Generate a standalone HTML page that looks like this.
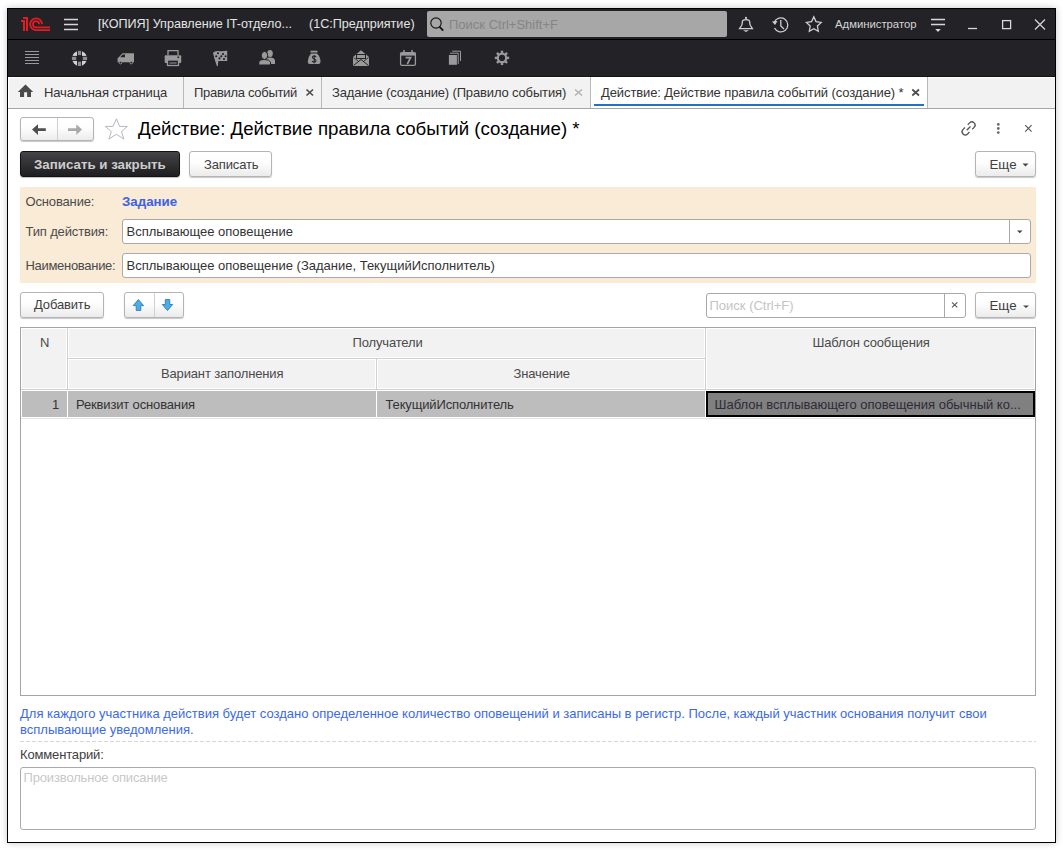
<!DOCTYPE html>
<html><head><meta charset="utf-8">
<style>
*{box-sizing:border-box;margin:0;padding:0}
html,body{width:1063px;height:850px;overflow:hidden;background:#fff;font-family:"Liberation Sans",sans-serif;}
.a{position:absolute}
.t{position:absolute;white-space:nowrap;line-height:1;font-size:12.6px;color:#333}
#win{position:absolute;left:7px;top:8px;width:1049px;height:835px;border:1px solid #000;background:#fff;box-shadow:0 0 7px rgba(0,0,0,0.22)}
.btn{position:absolute;border:1px solid #b4b4b4;border-radius:3px;background:linear-gradient(#fff 0%,#fdfdfd 45%,#ebebeb 100%);box-shadow:0 1px 1px rgba(0,0,0,0.22)}
.tx{font-size:13px;letter-spacing:-0.15px;color:#404040}
.hc{position:absolute;background:#f2f2f2}
</style></head><body>
<div id="win"></div>
<!-- title bar -->
<div class="a" style="left:8px;top:9px;width:1047px;height:30px;background:#232327"></div>
<div class="a" style="left:8px;top:39px;width:1047px;height:1px;background:#000"></div>
<!-- toolbar -->
<div class="a" style="left:8px;top:40px;width:1047px;height:37px;background:#232327"></div>
<div class="a" style="left:8px;top:76px;width:1047px;height:1px;background:#141417"></div>
<!-- tabs -->
<div class="a" style="left:8px;top:77px;width:1047px;height:31px;background:#f2f2f2;border-top:1px solid #fff;border-left:1px solid #fff"></div>
<div class="a" style="left:8px;top:108px;width:1047px;height:1px;background:#a6a6a6"></div>

<!-- title content -->
<svg class="a" style="left:0;top:0" width="1063" height="77" viewBox="0 0 1063 77">
 <g fill="none" stroke="#e31c23" stroke-width="2">
  <path d="M23 18H27V31"/>
  <path d="M21 21H24V31"/>
  <path d="M42 24.2A5.9 5.9 0 1 0 36.1 30.1H50" stroke-width="1.8"/>
  <path d="M39.2 24.2A3.1 3.1 0 1 0 36.1 27.3H50" stroke-width="1.8"/>
 </g>
 <g stroke="#d8d8d8" stroke-width="1.4">
  <path d="M64 19.5H78M64 24.5H78M64 29.5H78"/>
 </g>
 <!-- bell -->
 <g fill="none" stroke="#cfcfcf" stroke-width="1.3">
  <path d="M739.6 28.6H752.4L750.3 25.3Q749.7 24 749.7 22.3V21.9Q749.7 19.6 746 19.6Q742.3 19.6 742.3 21.9V22.3Q742.3 24 741.7 25.3Z"/>
 </g>
 <circle cx="746" cy="17.9" r="1.1" fill="#cfcfcf"/>
 <path d="M743 30.3H749L746 32Z" fill="#cfcfcf"/>
 <!-- history -->
 <g fill="none" stroke="#cfcfcf" stroke-width="1.3">
  <path d="M774.3 22.3A7 7 0 1 1 774.5 28"/>
  <path d="M780.8 20V26L784 29"/>
 </g>
 <path d="M772 21.5L777.5 21L775 25Z" fill="#cfcfcf"/>
 <!-- star -->
 <path d="M813.8 16.8L816 21.6L821.2 22.4L817.4 26.1L818.3 31.2L813.8 28.8L809.3 31.2L810.2 26.1L806.4 22.4L811.6 21.6Z" fill="none" stroke="#cfcfcf" stroke-width="1.3" stroke-linejoin="miter"/>
 <!-- filter -->
 <g stroke="#d8d8d8" stroke-width="1.3"><path d="M931 19.5H945M931 24.5H945"/></g>
 <path d="M935.2 29H940.8L938 32Z" fill="#d8d8d8"/>
 <!-- min max close -->
 <path d="M968 28.5H977" stroke="#d8d8d8" stroke-width="1.3"/>
 <rect x="1002.6" y="20.6" width="8" height="8" fill="none" stroke="#d8d8d8" stroke-width="1.3"/>
 <path d="M1035 19.5L1045 29.5M1045 19.5L1035 29.5" stroke="#d8d8d8" stroke-width="1.2"/>
 <!-- search box -->
 <rect x="427" y="11" width="300" height="26" rx="2" fill="#a7a7a7"/>
 <circle cx="436" cy="23" r="5.2" fill="none" stroke="#151515" stroke-width="1.15"/>
 <path d="M439.6 26.8L443.2 30.6" stroke="#151515" stroke-width="1.9"/>
</svg>
<div class="t" style="left:98px;top:18px;font-size:12.6px;color:#e4e4e4">[КОПИЯ] Управление IT-отдело...</div>
<div class="t" style="left:309px;top:18px;font-size:12.6px;color:#e4e4e4">(1С:Предприятие)</div>
<div class="t" style="left:449px;top:18px;font-size:13px;color:#858585">Поиск Ctrl+Shift+F</div>
<div class="t" style="left:835px;top:19px;font-size:11.3px;color:#d4d4d4">Администратор</div>

<!-- toolbar icons -->
<svg class="a" style="left:0;top:40px" width="520" height="36" viewBox="0 40 520 36">
 <g stroke="#9a9a9a" stroke-width="1.2"><path d="M25 51.5H39M25 54.5H39M25 57.5H39M25 60.5H39M25 63.5H39"/></g>
 <!-- lifebuoy -->
 <circle cx="79.5" cy="58.4" r="7.5" fill="#d2d2d2"/>
 <rect x="77" y="50" width="5" height="17" fill="#232327"/>
 <rect x="71" y="55.9" width="17" height="5" fill="#232327"/>
 <g fill="#8e8e8e"><rect x="77.9" y="50.8" width="3.2" height="4.3"/><rect x="77.9" y="61.7" width="3.2" height="4.3"/><rect x="71.9" y="56.8" width="4.3" height="3.2"/><rect x="82.8" y="56.8" width="4.3" height="3.2"/></g>
 <!-- truck -->
 <path d="M119 57L122.5 53.3H134V62.3H117.6V58.5Z" fill="#9a9a9a"/>
 <path d="M120.2 57.2L122.8 54.5H125V57.2Z" fill="#232327"/>
 <circle cx="120.5" cy="62.6" r="1.3" fill="#232327" stroke="#9a9a9a" stroke-width="0.9"/>
 <circle cx="131.3" cy="62.6" r="1.3" fill="#232327" stroke="#9a9a9a" stroke-width="0.9"/>
 <!-- printer -->
 <path d="M168 55V50.6H178V55" fill="none" stroke="#9a9a9a" stroke-width="1.3"/>
 <rect x="164.7" y="55.3" width="16.5" height="7.7" rx="1" fill="#9a9a9a"/>
 <rect x="167.5" y="60" width="11" height="5.5" fill="#232327" stroke="#9a9a9a" stroke-width="1.3"/>
 <path d="M169.5 63H176.5" stroke="#9a9a9a" stroke-width="1"/>
 <rect x="177.5" y="56.5" width="1.6" height="1.6" fill="#232327"/>
 <!-- flag -->
 <path d="M213 52.8Q214.6 50.8 218.6 51.1Q222.8 51.6 227.2 50.8V61H218.3L217.8 66.2L216.8 66L214.4 58.5Z" fill="#9a9a9a"/>
 <g fill="#1e1e22"><circle cx="218" cy="53.3" r="1.05"/><circle cx="223" cy="54" r="1.05"/><circle cx="216.2" cy="56.3" r="1.05"/><circle cx="221.3" cy="56.2" r="1.05"/><circle cx="225.6" cy="56.2" r="1.05"/><circle cx="219.5" cy="58.4" r="1.05"/><circle cx="224" cy="59" r="1.05"/></g>
 <!-- people -->
 <ellipse cx="270" cy="53.5" rx="2.8" ry="3.5" fill="#9a9a9a"/>
 <path d="M265.5 64V60.5Q266 57.5 270 57.5Q274.5 57.5 275 60.5V64Z" fill="#9a9a9a"/>
 <ellipse cx="264.5" cy="55.5" rx="3.2" ry="4" fill="#9a9a9a" stroke="#232327" stroke-width="1"/>
 <path d="M258.8 65V62Q259.5 59.5 264.5 59.5Q269.5 59.5 270.5 62V65Z" fill="#9a9a9a" stroke="#232327" stroke-width="1"/>
 <!-- money bag -->
 <rect x="310.5" y="50.7" width="7" height="1.8" fill="#9a9a9a"/>
 <path d="M311 53.5H317Q320.5 57 320.5 61.5Q320.5 64 318.5 64H309.5Q307.8 64 307.8 61.5Q307.8 57 311 53.5Z" fill="#9a9a9a"/>
 <path d="M316.2 56.9Q315.4 56 314.1 56Q312.4 56.1 312.5 57.5Q312.6 58.4 314.2 58.9Q316 59.5 316 60.7Q315.9 62.1 314.1 62.1Q312.8 62.1 312 61.2M314.2 54.9V63.2" fill="none" stroke="#232327" stroke-width="1.1"/>
 <!-- envelope -->
 <path d="M353 57L361 50.3L369 57V66H353Z" fill="#9a9a9a"/>
 <rect x="356" y="54" width="10" height="5" fill="#232327"/>
 <rect x="357" y="55" width="8" height="3" fill="#9a9a9a"/>
 <path d="M353.5 65.5L361 59.5L368.5 65.5" fill="none" stroke="#232327" stroke-width="1"/>
 <path d="M353.5 57.5L358 61M368.5 57.5L364 61" stroke="#232327" stroke-width="0.8"/>
 <!-- calendar -->
 <rect x="400.6" y="52.6" width="14.8" height="12.8" rx="1.3" fill="none" stroke="#9a9a9a" stroke-width="1.3"/>
 <rect x="400.6" y="52.6" width="14.8" height="3" fill="#9a9a9a"/>
 <path d="M404 50V54M412 50V54" stroke="#9a9a9a" stroke-width="1.5"/>
 <path d="M405.6 57.6H410.6L407.3 64.2" fill="none" stroke="#9a9a9a" stroke-width="1.7"/>
 <!-- copies -->
 <rect x="448.9" y="55" width="8" height="9.8" fill="#9a9a9a"/>
 <path d="M450 53.2H458.2V64M452.2 51.2H460.5V61" fill="none" stroke="#9a9a9a" stroke-width="1"/>
 <!-- gear -->
 <g transform="translate(502 57.9)">
  <circle r="4.2" fill="none" stroke="#9a9a9a" stroke-width="2.2"/>
  <g fill="#9a9a9a">
   <rect x="-1.2" y="-7.2" width="2.4" height="3.4"/>
   <rect x="-1.2" y="-7.2" width="2.4" height="3.4" transform="rotate(45)"/>
   <rect x="-1.2" y="-7.2" width="2.4" height="3.4" transform="rotate(90)"/>
   <rect x="-1.2" y="-7.2" width="2.4" height="3.4" transform="rotate(135)"/>
   <rect x="-1.2" y="-7.2" width="2.4" height="3.4" transform="rotate(180)"/>
   <rect x="-1.2" y="-7.2" width="2.4" height="3.4" transform="rotate(225)"/>
   <rect x="-1.2" y="-7.2" width="2.4" height="3.4" transform="rotate(270)"/>
   <rect x="-1.2" y="-7.2" width="2.4" height="3.4" transform="rotate(315)"/>
  </g>
 </g>
</svg>

<!-- tabs content -->
<div class="a" style="left:183px;top:77px;width:1px;height:31px;background:#b9b9b9"></div>
<div class="a" style="left:321px;top:77px;width:1px;height:31px;background:#b9b9b9"></div>
<div class="a" style="left:590px;top:77px;width:1px;height:31px;background:#b9b9b9"></div>
<div class="a" style="left:591px;top:77px;width:336px;height:31px;background:#fff"></div>
<div class="a" style="left:927px;top:77px;width:1px;height:31px;background:#b9b9b9"></div>
<div class="a" style="left:594px;top:104px;width:330px;height:2px;background:#1f72c6"></div>
<svg class="a" style="left:0;top:77px" width="1063" height="31" viewBox="0 77 1063 31">
 <path d="M25.5 84.6L17.8 92H20V97H24.1V92.3H27.1V97H31V92H33.2Z" fill="#4a4a4a"/>
 <path d="M306.5 89.5L313 95.5M313 89.5L306.5 95.5" stroke="#4d4d4d" stroke-width="1.7"/>
 <path d="M575 89.5L582 95.5M582 89.5L575 95.5" stroke="#b0b0b0" stroke-width="1.5"/>
 <path d="M912.3 89.5L919 95.5M919 89.5L912.3 95.5" stroke="#4d4d4d" stroke-width="1.7"/>
</svg>
<div class="t tx" style="left:44px;top:86px;color:#333">Начальная страница</div>
<div class="t tx" style="left:194px;top:86px;letter-spacing:-0.3px;color:#333">Правила событий</div>
<div class="t tx" style="left:332px;top:86px;color:#333">Задание (создание) (Правило события)</div>
<div class="t tx" style="left:601px;top:86px;letter-spacing:-0.1px;color:#333">Действие: Действие правила событий (создание) *</div>

<!-- form header -->
<div class="btn" style="left:20px;top:117px;width:74px;height:24px"></div>
<div class="a" style="left:57px;top:118px;width:1px;height:22px;background:#d0d0d0"></div>
<svg class="a" style="left:0;top:110px" width="1063" height="40" viewBox="0 110 1063 40">
 <path d="M32 129.6L38 124.2V128.3H45.8V130.9H38V134.9Z" fill="#4f4f4f"/>
 <path d="M82 129.6L76.3 124.2V128.3H68V130.9H76.3V134.9Z" fill="#a9a9a9"/>
 <path d="M116.4 118.8L119.7 126.4H127.4L121.5 131.6L123.9 139.1L116.4 134.3L108.9 139.1L111.3 131.6L105.4 126.4H113.1Z" fill="none" stroke="#b2b8c0" stroke-width="1"/>
 <g transform="translate(968.6 128.4) rotate(-45)" fill="none" stroke="#555" stroke-width="1.3">
  <path d="M-2 -3.2H-4.6A3.2 3.2 0 0 0 -4.6 3.2H-2"/>
  <path d="M2 -3.2H4.6A3.2 3.2 0 0 1 4.6 3.2H2"/>
  <path d="M-2.6 0H2.6"/>
 </g>
 <circle cx="998.3" cy="124.4" r="1.4" fill="#6e6e6e"/>
 <circle cx="998.3" cy="128.5" r="1.4" fill="#6e6e6e"/>
 <circle cx="998.3" cy="132.6" r="1.4" fill="#6e6e6e"/>
 <path d="M1025.2 125.2L1031.6 131.6M1031.6 125.2L1025.2 131.6" stroke="#555" stroke-width="1.1"/>
</svg>
<div class="t" style="left:138px;top:120px;font-size:18.7px;color:#000">Действие: Действие правила событий (создание) *</div>

<!-- command bar -->
<div class="a" style="left:20px;top:151px;width:160px;height:26px;border-radius:3px;background:linear-gradient(#444448,#1e1e20);border:1px solid #121212;box-shadow:0 1px 1px rgba(0,0,0,0.25)"></div>
<div class="t" style="left:34px;top:158px;font-size:13.3px;font-weight:bold;color:#cdcdcd;letter-spacing:0">Записать и закрыть</div>
<div class="btn" style="left:189px;top:151px;width:83px;height:26px"></div>
<div class="t tx" style="left:204px;top:158px;color:#404040">Записать</div>
<div class="btn" style="left:975px;top:151px;width:61px;height:26px"></div>
<div class="t tx" style="left:989.5px;top:157.5px;color:#404040;letter-spacing:0;font-size:13.3px">Еще</div>
<svg class="a" style="left:1022px;top:163px" width="8" height="4"><path d="M0.5 0.5H6.5L3.5 3.5Z" fill="#444"/></svg>

<!-- beige panel -->
<div class="a" style="left:20px;top:187px;width:1016px;height:96px;background:#faebd7"></div>
<div class="t tx" style="left:25.5px;top:195px;color:#4a4a4a">Основание:</div>
<div class="t tx" style="left:122px;top:195px;font-size:13.3px;font-weight:bold;color:#3d62e6;letter-spacing:0">Задание</div>
<div class="t tx" style="left:25.5px;top:225px;color:#4a4a4a">Тип действия:</div>
<div class="t tx" style="left:25.5px;top:258.6px;color:#4a4a4a;letter-spacing:-0.3px">Наименование:</div>
<div class="a" style="left:122px;top:219px;width:909px;height:25px;background:#fff;border:1px solid #a9a9a9;border-radius:3px"></div>
<div class="a" style="left:1009px;top:220px;width:1px;height:23px;background:#a9a9a9"></div>
<svg class="a" style="left:1017px;top:230px" width="6" height="4"><path d="M0 0.5H5.5L2.75 3.3Z" fill="#444"/></svg>
<div class="t tx" style="left:126.5px;top:225px;color:#333;letter-spacing:0">Всплывающее оповещение</div>
<div class="a" style="left:122px;top:253px;width:909px;height:25px;background:#fff;border:1px solid #a9a9a9;border-radius:3px"></div>
<div class="t tx" style="left:126.5px;top:259px;color:#333;letter-spacing:0">Всплывающее оповещение (Задание, ТекущийИсполнитель)</div>

<!-- table toolbar -->
<div class="btn" style="left:20px;top:292px;width:84px;height:26px"></div>
<div class="t tx" style="left:34px;top:298px;color:#404040">Добавить</div>
<div class="btn" style="left:124px;top:292px;width:60px;height:26px"></div>
<div class="a" style="left:154px;top:293px;width:1px;height:24px;background:#d0d0d0"></div>

<div class="a" style="left:706px;top:293px;width:260px;height:25px;background:#fff;border:1px solid #a9a9a9;border-radius:3px"></div>
<div class="a" style="left:944px;top:294px;width:1px;height:23px;background:#a9a9a9"></div>
<div class="t tx" style="left:709.5px;top:299px;color:#c4c4c4;letter-spacing:0">Поиск (Ctrl+F)</div>
<div class="btn" style="left:975px;top:292px;width:61px;height:26px"></div>
<div class="t tx" style="left:989.5px;top:298.5px;color:#404040;letter-spacing:0;font-size:13.3px">Еще</div>
<svg class="a" style="left:0;top:290px" width="1063" height="30" viewBox="0 290 1063 30">
 <path d="M138.4 299.6L143.6 305.6H140.8V310.4H136.2V305.6H133.2Z" fill="#4aaee8" stroke="#2f7cb8" stroke-width="0.9" stroke-linejoin="miter"/>
 <path d="M167.5 310.5L172.7 304.5H169.8V299.6H165.3V304.5H162.3Z" fill="#4aaee8" stroke="#2f7cb8" stroke-width="0.9" stroke-linejoin="miter"/>
 <path d="M952 302.3L957.3 307.3M957.3 302.3L952 307.3" stroke="#555" stroke-width="1.1"/>
 <path d="M1023 305.6H1029L1026 308Z" fill="#444"/>
</svg>

<!-- table -->
<div class="a" style="left:20px;top:327px;width:1016px;height:369px;border:1px solid #a4a4a4;background:#fff"></div>
<div class="hc" style="left:22px;top:329px;width:44px;height:59px"></div>
<div class="hc" style="left:69px;top:329px;width:635px;height:28px"></div>
<div class="hc" style="left:69px;top:360px;width:306px;height:28px"></div>
<div class="hc" style="left:378px;top:360px;width:326px;height:28px"></div>
<div class="hc" style="left:707px;top:329px;width:327px;height:59px"></div>
<div class="a" style="left:67px;top:328px;width:1px;height:62px;background:#d0d0d0"></div>
<div class="a" style="left:67px;top:358px;width:639px;height:1px;background:#d0d0d0"></div>
<div class="a" style="left:376px;top:358px;width:1px;height:32px;background:#d0d0d0"></div>
<div class="a" style="left:705px;top:328px;width:1px;height:62px;background:#d0d0d0"></div>
<div class="a" style="left:21px;top:389px;width:1014px;height:1px;background:#d0d0d0"></div>
<div class="a" style="left:22px;top:391px;width:45px;height:26px;background:#bdbdbd"></div>
<div class="a" style="left:68px;top:391px;width:308px;height:26px;background:#bdbdbd"></div>
<div class="a" style="left:377px;top:391px;width:328px;height:26px;background:#bdbdbd"></div>
<div class="a" style="left:706px;top:391px;width:329px;height:26px;background:#808080;border:2px solid #000"></div>
<div class="a" style="left:21px;top:418px;width:1014px;height:1px;background:#e4e4e4"></div>
<div class="t tx" style="left:40px;top:336px;color:#4a4a4a">N</div>
<div class="t tx" style="left:352.5px;top:336px;color:#4a4a4a">Получатели</div>
<div class="t tx" style="left:812.5px;top:336px;color:#4a4a4a">Шаблон сообщения</div>
<div class="t tx" style="left:161px;top:367px;color:#4a4a4a">Вариант заполнения</div>
<div class="t tx" style="left:513.5px;top:367px;color:#4a4a4a">Значение</div>
<div class="t tx" style="left:52px;top:397.7px;color:#333">1</div>
<div class="t tx" style="left:76px;top:397.7px;color:#333">Реквизит основания</div>
<div class="t tx" style="left:385.5px;top:397.7px;color:#333">ТекущийИсполнитель</div>
<div class="t tx" style="left:714.5px;top:397.7px;color:#2e2a38;letter-spacing:0">Шаблон всплывающего оповещения обычный ко...</div>

<!-- bottom -->
<div class="t tx" style="left:20px;top:706px;color:#3b6ae8;line-height:16px;white-space:normal;width:1000px;letter-spacing:0">Для каждого участника действия будет создано определенное количество оповещений и записаны в регистр. После, каждый участник основания получит свои всплывающие уведомления.</div>
<div class="a" style="left:20px;top:741px;width:1016px;height:1px;background:repeating-linear-gradient(90deg,#d6d6d6 0 4px,transparent 4px 6px)"></div>
<div class="t tx" style="left:20px;top:748px;color:#404040">Комментарий:</div>
<div class="a" style="left:20px;top:767px;width:1016px;height:63px;background:#fff;border:1px solid #a9a9a9;border-radius:3px"></div>
<div class="t tx" style="left:23.5px;top:771px;color:#c8c8c8;letter-spacing:-0.15px">Произвольное описание</div>
<div id="content"></div>
</body></html>
